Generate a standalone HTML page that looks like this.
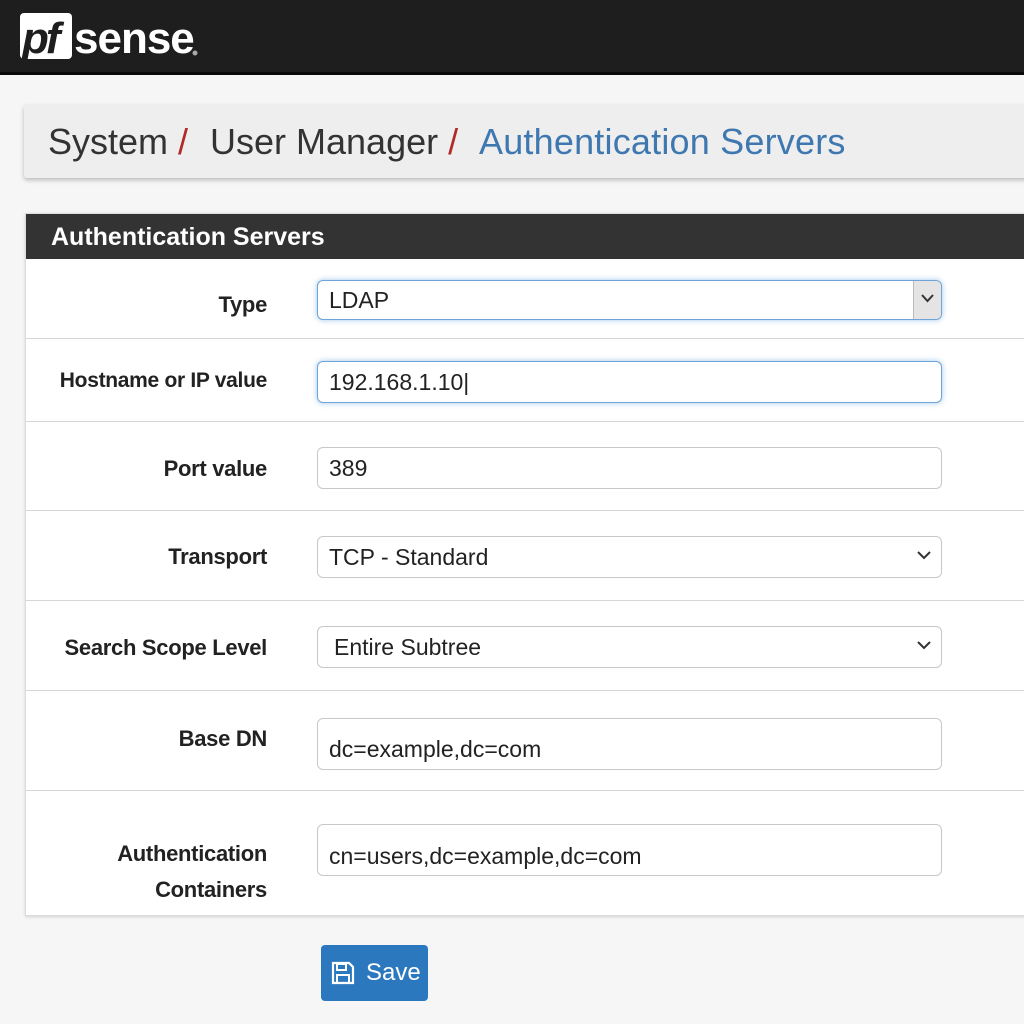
<!DOCTYPE html><html><head><style>
body{margin:0;width:1024px;height:1024px;background:#f6f6f6;font-family:"Liberation Sans",sans-serif;position:relative;overflow:hidden}
.hdr{position:absolute;left:0;top:0;width:1024px;height:72px;background:#1e1e1e;border-bottom:3px solid #0a0a0a}
.logo{position:absolute;left:20px;top:13px}
.bc{position:absolute;left:24px;top:105px;width:1010px;height:73px;background:#eeeeee;box-shadow:0 2px 5px rgba(0,0,0,.25);border-radius:3px}
.bc span{position:absolute;top:16px;font-size:36px;color:#333;white-space:nowrap}
.panel{position:absolute;left:25px;top:213px;width:1010px;height:701px;background:#fff;border:1px solid #ddd;box-shadow:0 1px 3px rgba(0,0,0,.15)}
.ph{height:45px;background:#333;color:#fff;font-weight:bold;font-size:25px;line-height:47px;padding-left:25px}
.sep{position:absolute;left:0;width:1010px;height:1px;background:#d6d6d6}
.lab{position:absolute;right:769px;font-weight:bold;font-size:22px;color:#222;text-align:right;white-space:nowrap;letter-spacing:-0.3px}
.in{position:absolute;left:291px;width:612px;height:40px;border:1.5px solid #c8c8c8;border-radius:6px;background:#fff;font-size:23px;color:#222;line-height:40px;padding-left:11px;box-sizing:content-box}
.foc{border-color:#6fa4d8;box-shadow:0 0 6px rgba(80,150,220,.55)}
.chev{position:absolute;right:10px;top:14px}
.save{position:absolute;left:321px;top:945px;width:107px;height:56px;background:#2b78be;border-radius:4px;color:#fff;font-size:24px;line-height:56px}
</style></head><body>
<div class="hdr"><div class="logo"><svg width="190" height="50"><rect x="0" y="0" width="52" height="46" rx="4" fill="#fff"/><text x="2" y="40" font-family="Liberation Sans" font-weight="bold" font-style="italic" font-size="44" fill="#1e1e1e" letter-spacing="-3">pf</text><text x="54" y="40" font-family="Liberation Sans" font-weight="bold" font-size="44" fill="#fff" letter-spacing="-1">sense</text><circle cx="175" cy="40" r="2.5" fill="#aaa"/></svg></div></div>
<div class="bc"><span style="left:24px">System <span style="position:static;color:#b02a2a">/</span></span><span style="left:186px">User Manager <span style="position:static;color:#b02a2a">/</span></span><span style="left:455px;color:#3f78b0;letter-spacing:0.2px">Authentication Servers</span></div>
<div class="panel"><div class="ph">Authentication Servers</div>
<div class="sep" style="top:124px"></div><div class="sep" style="top:207px"></div><div class="sep" style="top:296px"></div><div class="sep" style="top:386px"></div><div class="sep" style="top:476px"></div><div class="sep" style="top:576px"></div>
<div class="lab" style="top:78px">Type</div>
<div class="in foc" style="top:66px;height:38px;line-height:38px">LDAP<div style="position:absolute;right:0;top:0;width:27px;height:38px;background:#e4e4e4;border-left:1px solid #bbb;border-radius:0 5px 5px 0"><svg class="chev" style="right:7px;top:13px" width="13" height="9"><path d="M1 1l5.5 6 5.5-6" stroke="#333" stroke-width="2" fill="none"/></svg></div></div>
<div class="lab" style="top:155px;font-size:21px">Hostname or IP value</div>
<div class="in foc" style="top:147px">192.168.1.10|</div>
<div class="lab" style="top:242px">Port value</div>
<div class="in" style="top:233px">389</div>
<div class="lab" style="top:330px">Transport</div>
<div class="in" style="top:322px">TCP - Standard<svg class="chev" width="14" height="9"><path d="M1 1l6 6 6-6" stroke="#333" stroke-width="2" fill="none"/></svg></div>
<div class="lab" style="top:421px">Search Scope Level</div>
<div class="in" style="top:412px;padding-left:16px;width:607px">Entire Subtree<svg class="chev" width="14" height="9"><path d="M1 1l6 6 6-6" stroke="#333" stroke-width="2" fill="none"/></svg></div>
<div class="lab" style="top:512px">Base DN</div>
<div class="in" style="top:504px;height:50px;line-height:60px">dc=example,dc=com</div>
<div class="lab" style="top:622px;line-height:36px">Authentication<br>Containers</div>
<div class="in" style="top:610px;height:50px;line-height:62px">cn=users,dc=example,dc=com</div>
</div>
<div class="save"><svg style="position:absolute;left:10px;top:16px" width="24" height="24" viewBox="0 0 24 24"><path d="M2 2h16l4 4v16H2z" fill="none" stroke="#fff" stroke-width="2.2"/><rect x="6" y="3" width="9" height="6" fill="none" stroke="#fff" stroke-width="2"/><rect x="6" y="14" width="12" height="8" fill="none" stroke="#fff" stroke-width="2"/></svg><span style="position:absolute;left:45px">Save</span></div>
</body></html>
